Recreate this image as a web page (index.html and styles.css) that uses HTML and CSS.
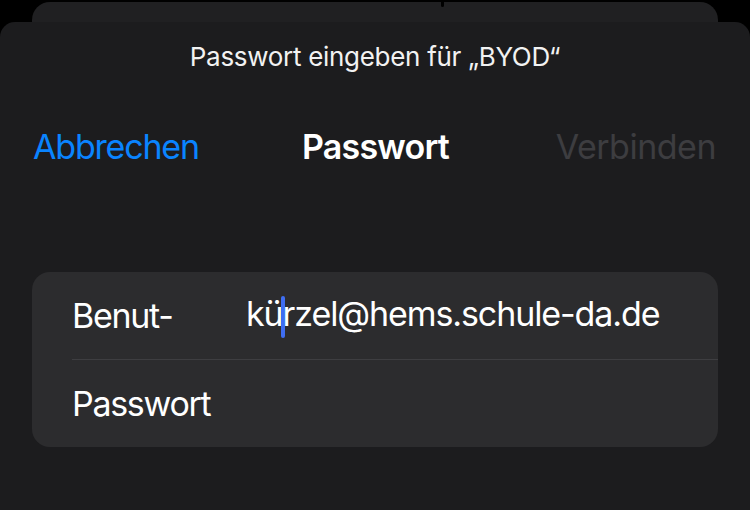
FILE: index.html
```html
<!DOCTYPE html>
<html lang="de">
<head>
<meta charset="utf-8">
<title>Passwort</title>
<link rel="stylesheet" href="styles.css">
</head>
<body>
<div class="screen">
  <div class="back-card"><span class="notch"></span></div>
  <div class="sheet">
    <div class="prompt">Passwort eingeben für „BYOD“</div>
    <div class="navbar">
      <span class="nav-cancel">Abbrechen</span>
      <span class="nav-title">Passwort</span>
      <span class="nav-join">Verbinden</span>
    </div>
    <div class="group">
      <div class="row">
        <div class="row-inner">
          <span class="label">Benut-</span>
          <span class="value">kü<span class="caret"></span>rzel@hems.schule-da.de</span>
        </div>
      </div>
      <div class="row">
        <div class="row-inner last">
          <span class="label">Passwort</span>
          <span class="value"></span>
        </div>
      </div>
    </div>
  </div>
</div>
</body>
</html>
```
FILE: styles.css
```css
html, body {
  margin: 0;
  padding: 0;
  background: #000;
}
body {
  width: 750px;
  height: 510px;
  overflow: hidden;
  font-family: Inter, "Noto Sans", "Liberation Sans", sans-serif;
  color: #fff;
}
.screen {
  padding-top: 2px;
  display: flex;
  flex-direction: column;
  height: 508px;
}
.back-card {
  margin: 0 32px;
  height: 20px;
  background: #202022;
  border-radius: 18px 18px 0 0;
  display: flex;
  justify-content: flex-start;
}
.notch {
  width: 3px;
  height: 7px;
  margin-left: 409px;
  margin-top: -2px;
  background: #000;
  border-radius: 0 0 2px 2px;
}
.sheet {
  flex: 1;
  background: #1c1c1e;
  border-radius: 15px 15px 0 0;
  display: flex;
  flex-direction: column;
}
.prompt {
  margin-top: 19px;
  text-align: center;
  font-size: 26px;
  line-height: 32px;
  letter-spacing: -0.3px;
  color: #f2f2f2;
}
.navbar {
  margin-top: 54px;
  display: grid;
  grid-template-columns: 1fr auto 1fr;
  align-items: center;
  padding: 0 34px 0 33px;
  font-size: 34px;
  line-height: 40px;
  letter-spacing: -1.2px;
}
.nav-cancel {
  color: #0a84ff;
  justify-self: start;
}
.nav-title {
  font-weight: 600;
  color: #fff;
  letter-spacing: -0.8px;
  padding-left: 2px;
}
.nav-join {
  color: #3d3d40;
  justify-self: end;
  letter-spacing: -0.5px;
}
.group {
  margin: 105px 32px 0;
  background: #2c2c2e;
  border-radius: 18px;
  overflow: hidden;
}
.row {
  padding-left: 40px;
}
.row-inner {
  height: 88px;
  display: flex;
  align-items: center;
  border-bottom: 1px solid #3e3e41;
  box-sizing: border-box;
  font-size: 34px;
  letter-spacing: -1.3px;
}
.row-inner.last {
  border-bottom: none;
  height: 87px;
}
.label {
  width: 174px;
  flex: none;
}
.value {
  letter-spacing: -1.1px;
}
.caret {
  display: inline-block;
  width: 4px;
  height: 42px;
  margin: 0 -2px;
  background: #3f6ef2;
  border-radius: 2px;
  vertical-align: middle;
}
```
